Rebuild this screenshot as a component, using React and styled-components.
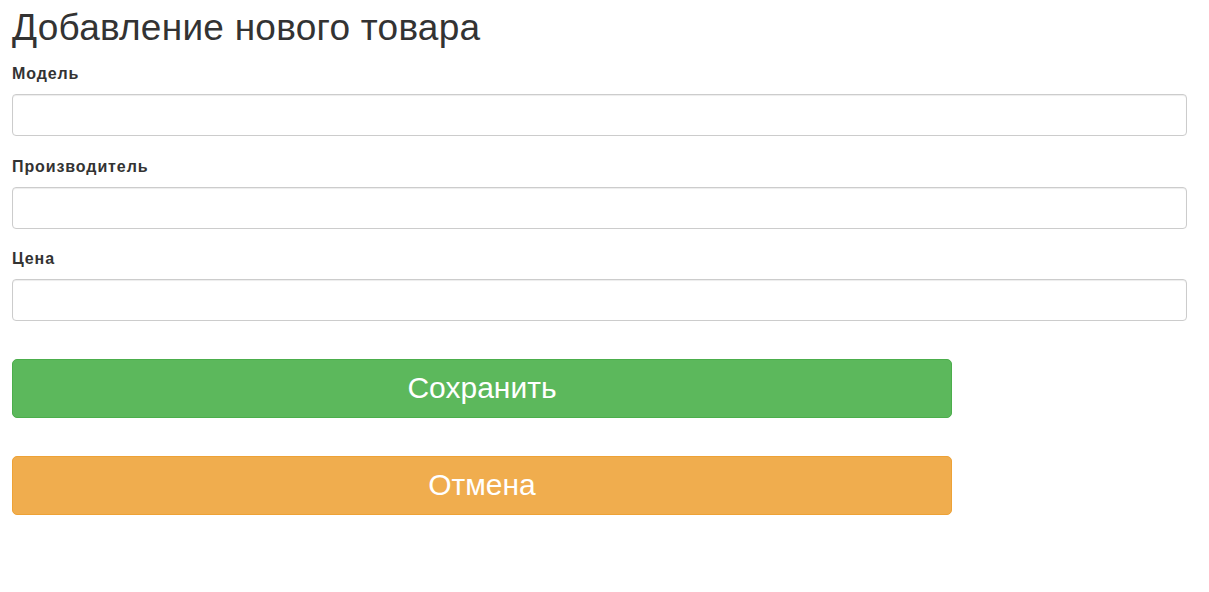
import React from "react";
import styled, { createGlobalStyle } from "styled-components";

const Global = createGlobalStyle`
  html, body { margin: 0; padding: 0; background: #fff; }
  body {
    font-family: "Liberation Sans", Arial, Helvetica, sans-serif;
    font-size: 14px;
    line-height: 1.42857;
    color: #333;
  }
  * { box-sizing: border-box; }
`;

const Page = styled.div`
  padding: 0 22px 0 12px;
`;

const Title = styled.h1`
  margin: 8px 0 0;
  font-size: 37px;
  font-weight: 500;
  line-height: 40px;
  letter-spacing: 0.25px;
  color: #333;
`;

const Form = styled.form`
  display: flex;
  flex-direction: column;
  margin-top: 16px;
`;

const Group = styled.div`
  display: flex;
  flex-direction: column;
  margin-bottom: 20.5px;
`;

const Label = styled.label`
  font-weight: 700;
  font-size: 16px;
  letter-spacing: 0.9px;
  line-height: 20px;
  margin-bottom: 10px;
`;

const Input = styled.input`
  height: 42px;
  width: 100%;
  padding: 6px 12px;
  font-family: inherit;
  font-size: 14px;
  border: 1px solid #ccc;
  border-radius: 4px;
  box-shadow: inset 0 1px 1px rgba(0, 0, 0, 0.075);
  background: #fff;
  outline: none;
`;

const Actions = styled.div`
  display: flex;
  flex-direction: column;
  gap: 38px;
  width: 940px;
  margin-top: 17px;
`;

const Button = styled.button`
  height: 59px;
  width: 100%;
  border-radius: 5px;
  font-family: inherit;
  font-size: 30px;
  color: #fff;
  cursor: pointer;
  background: ${(p) => (p.$variant === "warning" ? "#f0ad4e" : "#5cb85c")};
  border: 1px solid ${(p) => (p.$variant === "warning" ? "#eea236" : "#4cae4c")};
`;

export default function App() {
  return (
    <>
      <Global />
      <Page>
        <Title>Добавление нового товара</Title>
        <Form onSubmit={(e) => e.preventDefault()}>
          <Group>
            <Label>Модель</Label>
            <Input type="text" />
          </Group>
          <Group>
            <Label>Производитель</Label>
            <Input type="text" />
          </Group>
          <Group>
            <Label>Цена</Label>
            <Input type="text" />
          </Group>
          <Actions>
            <Button type="submit">Сохранить</Button>
            <Button type="button" $variant="warning">Отмена</Button>
          </Actions>
        </Form>
      </Page>
    </>
  );
}
